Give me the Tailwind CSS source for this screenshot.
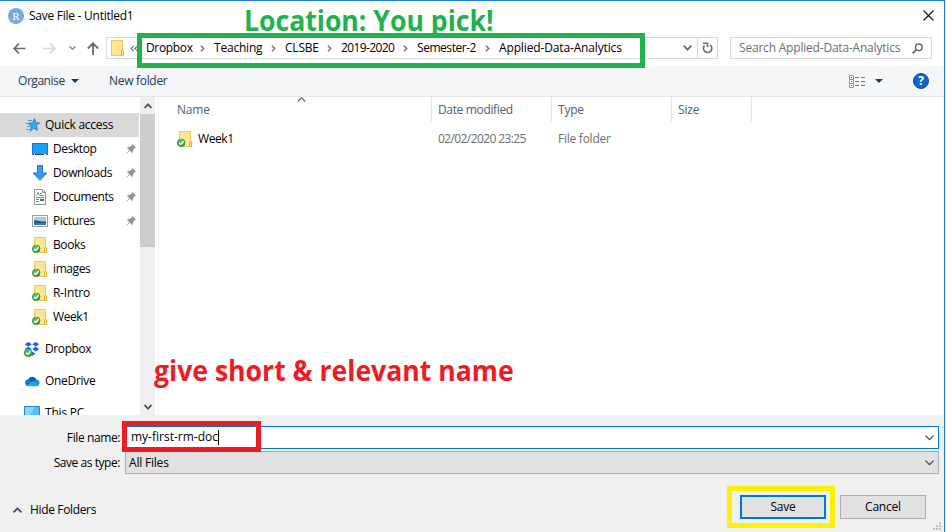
<!DOCTYPE html>
<html lang="en">
<head>
<meta charset="utf-8">
<title>Save File</title>
<script src="https://cdn.jsdelivr.net/npm/@tailwindcss/browser@4"></script>
</head>
<body class="w-[946px] h-[532px] overflow-hidden bg-[#e9edf1] font-['Open_Sans','Noto_Sans',sans-serif] text-[12px] leading-4 tracking-[-0.2px] text-black">
<svg class="hidden">
  <symbol id="folder" viewBox="0 0 16 16">
    <path d="M2.5.5h11v9.500l1 1v4.500h-12z" fill="#ffe694" stroke="#edc85b"/>
    <path d="M12.5 15.500v-4.500l1-1 1 1v4.500z" fill="#ffe08a" stroke="#e3b53c"/>
  </symbol>
  <symbol id="check" viewBox="0 0 8 8">
    <circle cx="4" cy="4" r="4" fill="#35993c"/><circle cx="4" cy="3.200" r="2.800" fill="#5ab85d"/>
    <path d="M1.900 4l1.600 1.600L6.200 2.500" fill="none" stroke="#fff" stroke-width="1.300"/>
  </symbol>
  <symbol id="synced" viewBox="0 0 16 16">
    <use href="#folder" width="16" height="16"/>
    <use href="#check" x="0" y="7.500" width="8.500" height="8.500"/>
  </symbol>
  <symbol id="pin" viewBox="0 0 10 10">
    <path d="M6.200 0L10 3.800 8.700 4.200 7 6 7 8.400 6.200 9 3.800 6.600.6 9.800.1 9.400 3.200 6 1 3.800 1.700 3 4 3 5.800 1.300z" fill="#8c98a3"/>
  </symbol>
  <symbol id="sep" viewBox="0 0 5 7"><path d="M.9.8L3.700 3.500.9 6.200" fill="none" stroke="#777" stroke-width="1.500"/></symbol>
  <symbol id="down" viewBox="0 0 9 6"><path d="M.5.7l4 4 4-4" fill="none" stroke="currentColor" stroke-width="1.200"/></symbol>
</svg>

<div class="relative flex h-[532px] w-[945px] flex-col border-t border-r border-[#1b7fd6] bg-white">
  <header class="flex h-[32px] shrink-0 items-center pl-2 pr-[10px]">
    <svg class="mt-[-3px] h-4 w-4" viewBox="0 0 16 16"><circle cx="8" cy="8" r="8" fill="#75aadb"/><text x="8" y="11.500" text-anchor="middle" font-family="Liberation Serif" font-size="10.500" letter-spacing="0" fill="#fff">R</text></svg>
    <h1 class="mt-[-3px] ml-[5px] grow tracking-[-0.26px]">Save File - Untitled1</h1>
    <svg class="mt-[-3px] h-[11px] w-[11px]" viewBox="0 0 11 11"><path d="M.5.5l10 10M10.500.5l-10 10" stroke="#111" stroke-width="1.100"/></svg>
  </header>

  <nav class="flex h-[33px] shrink-0 items-start pt-1 pl-[13px]">
    <div class="flex h-[22px] w-[93px] items-center">
      <svg class="h-[11px] w-[13px]" viewBox="0 0 13 11"><path d="M12.500 5.500H1M6 .7L1.200 5.500 6 10.300" fill="none" stroke="#6b6b6b" stroke-width="1.700"/></svg>
      <svg class="ml-[17px] h-[11px] w-[13px]" viewBox="0 0 13 11"><path d="M0 5.500h11.500M7 .7l4.800 4.800L7 10.300" fill="none" stroke="#d8d8d8" stroke-width="1.700"/></svg>
      <svg class="ml-[13px] h-[4px] w-[7px] text-[#888]" viewBox="0 0 7 4"><path d="M.6.4L3.500 3.200 6.400.4" fill="none" stroke="#888" stroke-width="1.400"/></svg>
      <svg class="ml-[11px] h-[13px] w-[12px]" viewBox="0 0 12 13"><path d="M6 13V1.300M.8 6.500L6 1.300l5.200 5.200" fill="none" stroke="#6b6b6b" stroke-width="1.800"/></svg>
    </div>
    <div class="flex h-[22px] w-[612px] items-center border border-[#d9d9d9]">
      <svg class="ml-[2px] h-4 w-4"><use href="#folder"/></svg>
      <svg class="ml-[5px] h-[7px] w-[8px]" viewBox="0 0 8 7"><path d="M3.700.8L1 3.500l2.700 2.700M7.500.8L4.800 3.500l2.700 2.700" fill="none" stroke="#777" stroke-width="1.200"/></svg>
      <div class="ml-[8px] flex grow items-center">
        <span class="w-[54px] tracking-[-0.35px]">Dropbox</span><svg class="mr-[9px] h-[7px] w-[5px]"><use href="#sep"/></svg>
        <span class="w-[57px]">Teaching</span><svg class="mr-[9px] h-[7px] w-[5px]"><use href="#sep"/></svg>
        <span class="w-[42px]">CLSBE</span><svg class="mr-[9px] h-[7px] w-[5px]"><use href="#sep"/></svg>
        <span class="w-[62px] tracking-[-0.6px]">2019-2020</span><svg class="mr-[9px] h-[7px] w-[5px]"><use href="#sep"/></svg>
        <span class="w-[68px] tracking-[-0.45px]">Semester-2</span><svg class="mr-[9px] h-[7px] w-[5px]"><use href="#sep"/></svg>
        <span class="tracking-[-0.14px]">Applied-Data-Analytics</span>
      </div>
      <svg class="mr-[5px] h-[6px] w-[9px]" viewBox="0 0 9 6"><path d="M.7.7l3.800 3.900L8.300.7" fill="none" stroke="#6b6b6b" stroke-width="1.800"/></svg>
      <div class="flex h-full w-[20px] items-center justify-center border-l border-[#d9d9d9]">
        <svg class="h-[12px] w-[11px]" viewBox="0 0 11 12"><path d="M8 2.800A4.200 4.200 0 1 1 2.400 3.600M1 1.200h4.500v4" fill="none" stroke="#6b6b6b" stroke-width="1.600"/></svg>
      </div>
    </div>
    <div class="ml-[12px] flex h-[22px] w-[202px] items-center border border-[#d9d9d9] pl-2 text-[#6d6d6d]">
      <span class="grow">Search Applied-Data-Analytics</span>
      <svg class="mr-[8px] h-[11px] w-[11px]" viewBox="0 0 11 11"><circle cx="6.800" cy="4.200" r="3.300" fill="none" stroke="#6b6b6b" stroke-width="1.500"/><path d="M4.400 6.600L.6 10.400" stroke="#6b6b6b" stroke-width="1.900"/></svg>
    </div>
  </nav>

  <div class="flex h-[31px] shrink-0 items-center border-b border-[#e5e5e5] bg-[#f5f6f7] pl-[18px] text-[#1e395b]">
    <span class="w-[53px] tracking-[-0.45px]">Organise</span>
    <svg class="h-[4px] w-[8px]" viewBox="0 0 8 4"><path d="M0 0h8L4 4z" fill="#1e395b"/></svg>
    <span class="ml-[30px] grow tracking-[-0.3px]">New folder</span>
    <svg class="h-[13px] w-[17px]" viewBox="0 0 17 13"><path d="M.5.500h4v12h-4zM.5 4.500h4M.5 8.500h4" fill="#fff" stroke="#999"/><path d="M6 2.500h4m2 0h4M6 6.500h4m2 0h4M6 10.500h4m2 0h4" stroke="#777"/><path d="M2 2.500h1" stroke="#333"/><path d="M2 6.500h1" stroke="#1c7cf0"/><path d="M2 10.500h1" stroke="#e22"/></svg>
    <svg class="ml-[9px] h-[4px] w-[8px]" viewBox="0 0 8 4"><path d="M0 0h8L4 4z" fill="#1e395b"/></svg>
    <svg class="ml-[30px] mr-[15px] h-[16px] w-[16px]" viewBox="0 0 16 16"><circle cx="8" cy="8" r="7.500" fill="#0a67cb" stroke="#0a4f9f"/><text x="8" y="12.200" text-anchor="middle" font-family="Open Sans" font-weight="700" font-size="12" letter-spacing="0" fill="#fff">?</text></svg>
  </div>

  <main class="flex h-[318px] shrink-0 overflow-hidden">
    <aside class="w-[140px] shrink-0 pt-4 tracking-[-0.4px]">
      <div class="mr-px flex h-6 items-center bg-[#d9d9d9] pl-[26px]">
        <svg class="h-[14px] w-[14px]" viewBox="0 0 14 14"><path d="M8.500.5l1.200 4.200 4 .3-3.200 2.800 1 4.700-3.700-2.300-3.900 3.100 1.300-4.900L2 5.200l4.400-.4z" fill="#30a5f2" stroke="#1a7fce" stroke-width=".8"/><path d="M2 2.500h4M0 5.500h3M1 8.500h3M0 11.500h3" stroke="#4c9fdc"/></svg>
        <span class="ml-[5px] tracking-[-0.25px]">Quick access</span>
      </div>
      <div class="flex h-6 items-center pl-8">
        <svg class="h-4 w-4" viewBox="0 0 16 16"><path d="M.5 2.500h15v11H.5z" fill="#1ba0f8" stroke="#1276c4"/><path d="M1 13.500h14" stroke="#0a4d87"/><path d="M2 13.500h1m9 0h2" stroke="#fff"/></svg>
        <span class="ml-[5px] grow">Desktop</span><svg class="mr-1 h-[10px] w-[10px]"><use href="#pin"/></svg>
      </div>
      <div class="flex h-6 items-center pl-8">
        <svg class="h-4 w-4" viewBox="0 0 16 16"><path d="M5.500.5h5v7.500h4.500L8 15.300 1 8h4.500z" fill="#3b97e8" stroke="#2b7ccc"/></svg>
        <span class="ml-[5px] grow">Downloads</span><svg class="mr-1 h-[10px] w-[10px]"><use href="#pin"/></svg>
      </div>
      <div class="flex h-6 items-center pl-8">
        <svg class="h-4 w-4" viewBox="0 0 16 16"><path d="M2.500.5h8l3 3v12h-11z" fill="#fff" stroke="#8b959c"/><path d="M10.500.5v3h3" fill="none" stroke="#8b959c"/><path d="M4.500 6.500l1.500-3 1.500 3M8 4.500h2M8 6.500h4M4 8.500h8M4 10.500h3M4 12.500h3" fill="none" stroke="#3a95dc"/><path d="M8 11h4" stroke="#416b85" stroke-width="2"/></svg>
        <span class="ml-[5px] grow">Documents</span><svg class="mr-1 h-[10px] w-[10px]"><use href="#pin"/></svg>
      </div>
      <div class="flex h-6 items-center pl-8">
        <svg class="h-4 w-4" viewBox="0 0 16 16"><path d="M.5 2.500h15v11H.5z" fill="#fff" stroke="#999"/><path d="M2 4h12v8H2z" fill="#9dccf4"/><path d="M2 7.500c3-1 5 1.500 12 1v1.500H2z" fill="#355d56"/><path d="M2 10h12v2H2z" fill="#357cb5"/></svg>
        <span class="ml-[5px] grow">Pictures</span><svg class="mr-1 h-[10px] w-[10px]"><use href="#pin"/></svg>
      </div>
      <div class="flex h-6 items-center pl-8"><svg class="h-4 w-4"><use href="#synced"/></svg><span class="ml-[5px]">Books</span></div>
      <div class="flex h-6 items-center pl-8"><svg class="h-4 w-4"><use href="#synced"/></svg><span class="ml-[5px]">images</span></div>
      <div class="flex h-6 items-center pl-8"><svg class="h-4 w-4"><use href="#synced"/></svg><span class="ml-[5px] tracking-[-0.2px]">R-Intro</span></div>
      <div class="flex h-6 items-center pl-8"><svg class="h-4 w-4"><use href="#synced"/></svg><span class="ml-[5px]">Week1</span></div>
      <div class="mt-2 flex h-6 items-center pl-6">
        <svg class="h-4 w-4" viewBox="0 0 16 16"><path d="M4.300 1l3.500 2.300-3.500 2.300L.8 3.300zM11.700 1l3.500 2.300-3.500 2.300-3.500-2.300zM4.300 5.800l3.500 2.300-3.500 2.300L.8 8.100zM11.700 5.800l3.500 2.300-3.500 2.300-3.500-2.300zM8 10.500l3.400 2.200L8 15l-3-2.300z" fill="#0f62f5"/><use href="#check" x="0" y="7.500" width="8.500" height="8.500"/></svg>
        <span class="ml-[5px] tracking-[-0.4px]">Dropbox</span>
      </div>
      <div class="mt-2 flex h-6 items-center pl-6">
        <svg class="h-4 w-4" viewBox="0 0 16 16"><path d="M4 7a4.500 4.500 0 0 1 8.500-.5L11 10H5z" fill="#0b64b8"/><path d="M3.500 13A3.300 3.300 0 1 1 5.500 6.500l7 6.500z" fill="#1378d3"/><path d="M9 9l3.500-2.500A3.300 3.300 0 0 1 13 13z" fill="#1a90e5"/><path d="M2 12.500L9 8.500l6 3.500a2.500 2.500 0 0 1-2.500 1.200H3.500z" fill="#28a2ed"/></svg>
        <span class="ml-[5px] tracking-[-0.3px]">OneDrive</span>
      </div>
      <div class="mt-2 flex h-6 items-center pl-6">
        <svg class="h-4 w-4" viewBox="0 0 16 16"><path d="M.5 1.500h15v11H.5z" fill="#4fc0fb" stroke="#3583b3"/><path d="M1 2h10L5 12H1z" fill="#86d6ff"/></svg>
        <span class="ml-[5px] tracking-[-0.2px]">This PC</span>
      </div>
    </aside>
    <div class="flex w-[15px] shrink-0 flex-col items-center bg-[#f0f0f0]">
      <svg class="mt-[6px] h-[6px] w-[8px] shrink-0" viewBox="0 0 8 6"><path d="M.6 5L4 1.400 7.400 5" fill="none" stroke="#505050" stroke-width="1.800"/></svg>
      <div class="mt-[5px] h-[133px] w-full bg-[#cdcdcd]"></div>
      <svg class="mt-auto mb-[5px] h-[6px] w-[8px] shrink-0" viewBox="0 0 8 6"><path d="M.6 1L4 4.600 7.400 1" fill="none" stroke="#505050" stroke-width="1.800"/></svg>
    </div>
    <section class="ml-[3px] grow border-l border-[#f3f3f3]">
      <div class="relative flex h-[25px] items-center text-[#4c607a]">
        <span class="flex h-full w-[273px] items-center border-r border-[#e5e5e5] pl-[18px]">Name</span>
        <span class="flex h-full w-[120px] items-center border-r border-[#e5e5e5] pl-[6px] tracking-[-0.35px]">Date modified</span>
        <span class="flex h-full w-[120px] items-center border-r border-[#e5e5e5] pl-[6px]">Type</span>
        <span class="flex h-full w-[80px] items-center border-r border-[#e5e5e5] pl-[6px]">Size</span>
        <svg class="absolute top-0 left-[138px] h-[5px] w-[9px]" viewBox="0 0 9 5"><path d="M.7 4.500l3.800-3.700 3.800 3.700" fill="none" stroke="#666" stroke-width="1.100"/></svg>
      </div>
      <div class="mt-[5px] flex h-6 items-center text-[#6d6d6d]">
        <svg class="ml-[18px] h-4 w-4"><use href="#synced"/></svg>
        <span class="ml-[5px] w-[240px] tracking-[-0.4px] text-black">Week1</span>
        <span class="w-[120px] tracking-[-0.6px]">02/02/2020 23:25</span>
        <span class="tracking-[-0.25px]">File folder</span>
      </div>
    </section>
  </main>

  <footer class="grow bg-[#f0f0f0] pt-[11px]">
    <div class="flex h-[23px] items-center">
      <label class="w-[125px] pr-[5px] text-right tracking-[-0.4px]">File name:</label>
      <div class="flex h-full w-[814px] items-center border border-[#0078d7] bg-white pl-[5px]">
        <span class="mb-px tracking-[0px]">my-first-rm-doc</span><span class="mb-px h-[15px] w-px bg-black"></span>
        <svg class="ml-auto mr-[4px] h-[6px] w-[9px] text-[#444]"><use href="#down"/></svg>
      </div>
    </div>
    <div class="mt-[2px] flex h-[23px] items-center">
      <label class="w-[125px] pr-[5px] text-right tracking-[-0.45px]">Save as type:</label>
      <div class="flex h-full w-[814px] items-center border border-[#adadad] bg-[#e1e1e1] pl-[3px]">
        <span>All Files</span>
        <svg class="ml-auto mr-[4px] h-[6px] w-[9px] text-[#444]"><use href="#down"/></svg>
      </div>
    </div>
    <div class="mt-[21px] flex h-[24px] items-center pl-[13px]">
      <svg class="mt-[6px] h-[6px] w-[9px]" viewBox="0 0 9 6"><path d="M.6 5.300l3.900-3.900 3.900 3.900" fill="none" stroke="#444" stroke-width="1.700"/></svg>
      <span class="mt-[6px] ml-[8px] grow tracking-[-0.35px]">Hide Folders</span>
      <button class="h-[24px] w-[86px] border-2 border-[#0078d7] bg-[#e1e1e1]">Save</button>
      <button class="mr-[18px] ml-[14px] h-[24px] w-[86px] border border-[#adadad] bg-[#e1e1e1]">Cancel</button>
    </div>
  </footer>
  <svg class="absolute right-[3px] bottom-[2px] h-[8px] w-[8px]" viewBox="0 0 8 8"><path d="M6 0h2v2H6zM3 3h2v2H3zM6 3h2v2H6zM0 6h2v2H0zM3 6h2v2H3zM6 6h2v2H6z" fill="#bfbfbf"/></svg>
</div>

<p class="absolute top-[2px] left-[244px] origin-left scale-x-[.95] text-[28px] leading-9 font-bold tracking-[0px] whitespace-nowrap text-[#22b14c]">Location: You pick!</p>
<p class="absolute top-[352px] left-[154px] origin-left scale-x-[.95] text-[28px] leading-9 font-bold tracking-[0px] whitespace-nowrap text-[#ed1c24]">give short &amp; relevant name</p>
<div class="absolute top-[33px] left-[137px] h-[35px] w-[508px] border-5 border-[#22b14c]"></div>
<div class="absolute top-[421px] left-[122px] h-[31px] w-[139px] border-5 border-[#ed1c24]"></div>
<div class="absolute top-[486px] left-[727px] h-[42px] w-[108px] border-5 border-[#fff200]"></div>
</body>
</html>
